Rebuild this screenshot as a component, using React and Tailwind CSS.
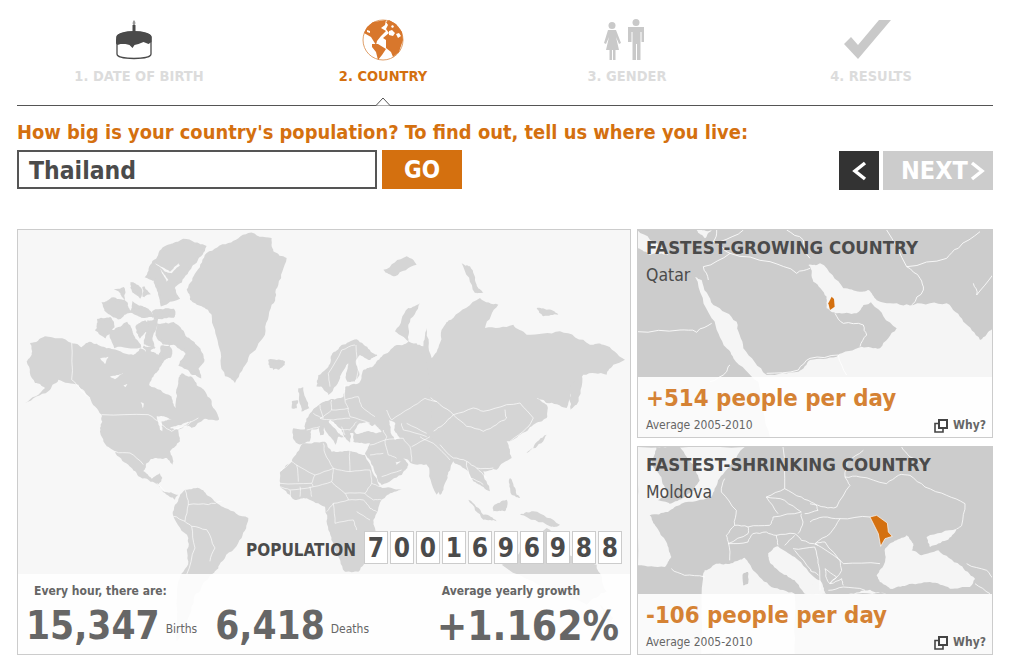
const F = "font-['DejaVu_Sans_Condensed','DejaVu_Sans',sans-serif]";

/* Deterministic midpoint displacement, so hand-traced coastlines read as coastlines. */
function rough(str, closed, amp, levels) {
  let seed = str.length * 7919 + 13;
  const rnd = () => {
    seed = (seed * 1664525 + 1013904223) % 4294967296;
    return seed / 4294967296 - 0.5;
  };
  const pts = str.trim().split(/\s+/).map((s) => s.split(",").map(Number));
  if (closed) pts.push(pts[0]);
  const out = [];
  const sub = (a, b, lvl) => {
    const dx = b[0] - a[0];
    const dy = b[1] - a[1];
    const len = Math.hypot(dx, dy);
    if (lvl === 0 || len < 5) return;
    const d = Math.min(len * 0.28, amp) * rnd();
    const m = [(a[0] + b[0]) / 2 - (dy / len) * d, (a[1] + b[1]) / 2 + (dx / len) * d];
    sub(a, m, lvl - 1);
    out.push(m);
    sub(m, b, lvl - 1);
  };
  for (let i = 0; i < pts.length - 1; i++) {
    out.push(pts[i]);
    sub(pts[i], pts[i + 1], levels);
  }
  if (!closed) out.push(pts[pts.length - 1]);
  return out.map((p) => p[0].toFixed(1) + "," + p[1].toFixed(1)).join(" ");
}

function Cake() {
  return (
    <svg width="36" height="41" viewBox="0 0 36 41" className="block">
      <rect x="16.500" y="6" width="3" height="9" fill="#4a4a4a" />
      <path d="M18 1c2 2 1.500 4 .8 5h-1.600c-.8-1-1-3 .8-5z" fill="#999" />
      <path d="M1 18c0-7 34-7 34 0v17c0 6-34 6-34 0z" fill="#fff" stroke="#4a4a4a" strokeWidth="1.300" />
      <path d="M.5 18c0-7 35-7 35 0v5l-3 2-5-2-5 2-4 1-2 3-3-3-4-1-5 0-3 1-2-2z" fill="#4a4a4a" />
    </svg>
  );
}

function Globe() {
  return (
    <svg width="42" height="42" viewBox="0 0 42 42" className="block">
      <circle cx="21" cy="21" r="20" fill="#fff" stroke="#e0a06a" strokeWidth="1" />
      <g fill="#d8772c">
        <path d="M11 3l13-2-1 5-4 3 5 3-5 5-4 5-1 4-5-8-7-4 3-6z" />
        <path d="M10 25l6 0 8 5-4 6-4 5-2-8-4-5z" />
        <path d="M27 1l7 4 6 8 1 8-4 12-6 5-2-5-5-4 0-8-3-2 6-5-3-4 2-4-2-3z" />
      </g>
      <g fill="#fff">
        <path d="M27 12l3-1 3 3-2 3-4-1zM34 15l3-1 2 3-3 2zM5 11l3 1 0 2-3-1zM30 6l2 1-1 2-2-1z" />
      </g>
    </svg>
  );
}

function Gender() {
  return (
    <svg width="42" height="41" viewBox="0 0 42 41" className="block" fill="#c9c9c9">
      <circle cx="10" cy="6.500" r="3.500" />
      <path d="M6 11h8l5 13-2 1-3-7 3 13h-3.500v10h-2.500v-10h-1v10h-2.500v-10h-3.500l3-13-3 7-2-1z" />
      <circle cx="34" cy="3.500" r="3.500" />
      <path d="M26 8h16v15h-2.500v-10h-1v28h-3.500v-16h-1v16h-3.500v-28h-1v10h-3.500z" />
    </svg>
  );
}

function Check() {
  return (
    <svg width="48" height="41" viewBox="0 0 48 41" className="block" fill="#c9c9c9">
      <path d="M0 25l7-7 7 8 21-25h12l-33 39z" />
    </svg>
  );
}

function Step({ icon, label, active, shift }) {
  return (
    <div className="flex flex-col items-center">
      <div className={`h-[43px] ${shift}`}>{icon}</div>
      <div className={`mt-[6px] text-[14.500px] leading-[17px] font-bold ${active ? "text-[#d4700f]" : "text-[#dcdcdc]"}`}>{label}</div>
    </div>
  );
}

const LAND = "#d5d5d5";
const SEA = "#f7f7f7";

function Pts({ list, fill, grow = 0, amp = 9 }) {
  return list.map((p, i) => (
    <polygon key={i} points={rough(p, true, amp, 3)} fill={fill} stroke={grow ? fill : "none"} strokeWidth={grow} />
  ));
}
function Lines({ list, w = 2, amp = 5 }) {
  return list.map((p, i) => (
    <polyline key={i} points={rough(p, false, amp, 2)} fill="none" stroke="#fff" strokeWidth={w} strokeLinejoin="round" />
  ));
}

/* zoom-6 frame: screen = (15 + x/3, 228 + y/3) */
const amer = [
  "45,345 90,325 170,345 200,358 225,341 265,356 305,366 355,381 375,361 410,371 430,381 465,351 460,381 440,411 415,446 402,471 470,506 482,541 490,466 500,436 530,446 545,471 570,490 590,520 600,545 612,575 570,572 545,590 530,600 510,592 490,605 495,640 465,670 472,710 455,690 420,690 395,705 385,730 410,752 435,735 442,750 430,770 445,790 490,800 480,815 450,795 420,765 370,745 340,710 300,670 265,640 255,600 260,560 225,510 190,470 130,455 100,490 30,525 90,480 60,465 35,400 50,380",
  "515,185 545,130 575,75 640,45 700,15 770,30 775,70 815,90 790,170 770,230 750,320 700,390 660,465 630,445 610,350 590,260 560,235 525,215",
  "510,785 560,785 590,810 630,840 700,870 680,930 630,990 600,1030 570,1060 540,1100 515,1200 485,1240 490,1060 520,1000 520,930 475,865 480,830",
  "760,395 810,400 790,425 765,420",
];
/* Arctic frame: screen = (90 + x/3, 240 + y/3) */
const arctic = [
  "170,110 190,65 220,25 280,0 345,20 320,60 290,100 250,145 265,175 215,195 210,170 195,120",
  "190,215 250,210 250,230 195,235",
  "125,130 150,145 150,170 130,155",
  "160,140 175,160 160,170",
  "40,190 70,175 110,190 120,215 85,235 60,220 45,205",
  "85,150 100,145 100,170",
  "130,190 165,205 190,230 155,230 125,215",
  "25,240 60,235 70,260 45,290 20,270",
  "60,275 110,250 130,290 150,320 75,320",
  "140,260 165,245 170,270 150,290",
  "175,245 200,240 185,290 190,320 165,310",
  "205,255 250,250 290,295 320,320 340,360 320,385 330,410 305,400 270,375 290,340 250,310 220,310 200,285",
  "215,320 240,325 240,350 215,360",
  "160,320 185,325 175,340",
];
const arcticLight = [
  "195,70 240,95 265,70 270,75 245,100 225,95",
  "210,85 235,120 230,125",
  "30,355 55,350 45,372",
  "60,410 100,400 75,418",
  "100,435 112,432 105,442",
  "262,335 276,335 276,348 262,348",
];
const lakes = [
  "425,565 445,565 470,575 440,580 442,610 435,605",
  "465,600 500,590 530,580 490,605",
  "375,520 385,525 385,545",
];
const amerB = [
  "170,345 170,455 200,490 225,510",
  "260,560 400,560 440,590 470,610 520,590 550,570",
  "300,670 345,675 385,710",
  "510,785 520,830 580,830 620,820",
  "475,865 510,880 530,895 575,905 600,960 585,1000",
  "530,895 540,960 515,1040",
  "425,765 450,790",
  "520,830 510,880",
];

/* zoom-7 frame: screen = (320 + x/3, 228 + y/3) */
const asia = [
  "175,410 240,360 265,340 225,310 265,240 300,225 265,290 265,340 310,355 320,300 335,390 355,360 375,290 400,270 480,210 535,230 495,300 580,290 620,320 720,310 810,350 850,350 915,395 880,410 860,440 790,440 750,500 740,540 680,525 650,510 680,530 680,570 640,590 600,620 560,640 575,690 530,725 490,730 510,790 480,770 460,760 430,720 400,700 350,800 320,710 300,600 200,500",
  "750,480 785,440 770,530 752,545",
  "620,675 640,660 680,620 670,640",
  "445,815 490,860 530,880 490,875",
  "520,835 560,815 555,850 520,850",
  "570,750 590,800 600,810 575,800",
  "640,850 720,890 690,895 600,860",
  "425,105 450,115 470,170 490,195 465,195",
  "650,240 680,245 715,260 670,265",
  "190,125 260,85 290,110 225,145",
  "545,1010 600,970 680,900 730,980 830,1010 860,1090 800,1130 690,1090",
  "840,1130 880,1170 870,1200",
];
const asiaB = [
  "200,545 270,520 320,505 360,530 400,560 460,540 490,550 560,530 600,525 640,570 620,600 570,640",
  "400,560 440,595 490,610 530,590 560,570 555,545",
  "370,590 400,560",
  "340,610 370,590",
  "360,650 400,690 440,700 470,720 520,720",
  "440,700 450,750 490,770",
  "470,720 500,750",
];

/* Europe frame: screen = (270 + x/3, 330 + y/3) */
const euro = [
  "70,295 105,298 110,265 125,245 150,222 185,207 220,200 225,170 268,158 280,120 305,112 335,80 380,45 440,40 470,100 490,300 480,400 430,402 400,385 415,405 395,435 335,465 325,455 295,385 285,372 300,340 250,335 250,310 240,310 240,338 222,320 215,300 180,270 165,290 125,298 118,335 85,342 72,330",
  "140,170 145,135 175,110 185,75 215,45 260,28 300,60 322,75 300,90 270,75 258,90 268,130 255,155 225,160 235,100 215,130 200,165 175,195 155,170",
  "160,288 175,275 205,310 222,322 205,320 197,345 165,300",
  "85,175 100,172 118,235 95,245 88,215",
  "65,215 85,212 80,235 65,235",
  "0,95 40,90 45,105 10,120",
  "150,290 160,290 160,315 150,315",
  "30,425 65,395 100,340 165,335 185,365 235,362 285,375 330,470 395,480 360,490 335,510 310,570 320,620 300,680 265,725 225,725 195,660 175,600 165,530 110,505 75,510 30,470",
  "480,390 480,430 510,495 530,450 540,400",
];
const euroSea = [
  "253,303 270,280 290,276 305,288 315,282 335,305 320,310 295,303 260,312",
  "358,270 375,278 372,300 390,325 375,330 362,305",
  "236,100 225,125 203,165 198,195 220,190 226,168 258,155 232,155 225,140",
  "375,395 395,395 380,405",
];
const euroB = [
  "30,425 65,395 72,400 135,435 190,415 165,370 160,340",
  "135,435 125,460 30,460",
  "80,405 85,455",
  "190,415 185,455 130,470 125,460",
  "240,362 240,425 190,415",
  "240,425 300,420 305,460 285,490",
  "185,455 225,490 285,490",
  "225,490 235,510 190,520 170,545",
  "285,490 310,510 335,510",
  "305,460 330,470",
  "30,470 60,480 130,470",
  "60,480 60,505",
  "90,470 90,500",
  "120,470 125,500",
  "235,510 280,510 300,535 320,545",
  "190,520 195,580 250,570 260,600",
  "260,545 300,570",
  "300,345 345,330 400,325",
  "345,330 355,375 380,385",
  "300,375 340,370",
  "335,440 395,420",
  "400,325 420,350 425,395",
  "425,350 480,320",
  "350,240 365,270 420,235 465,205 500,215",
  "395,280 400,300 470,320",
  "410,280 470,310",
  "450,320 490,340 540,390",
  "180,170 175,130 215,60 255,45",
  "258,45 265,120 255,155",
  "225,165 225,210 265,200 275,230 315,260",
  "150,225 160,265 130,250",
  "185,210 185,240 150,265",
  "225,210 235,235 185,240",
  "235,235 240,260 300,280",
  "150,265 190,270 240,265",
  "180,270 210,300 240,300 260,275",
  "215,290 225,315",
  "340,300 350,320 345,330",
  "110,300 150,290",
];

function WorldMap() {
  return (
    <svg className="absolute inset-0" width="612" height="424" viewBox="18 230 612 424">
      <g transform="translate(15 228) scale(0.3333)">
        <Pts list={amer} fill={LAND} />
        <Pts list={lakes} fill={SEA} amp={3} />
        <Lines list={amerB} />
      </g>
      <g transform="translate(90 240) scale(0.3333)">
        <Pts list={arctic} fill={LAND} grow={7} amp={8} />
        <Pts list={arcticLight} fill={SEA} amp={2} />
      </g>
      <g transform="translate(320 228) scale(0.3333)">
        <Pts list={asia} fill={LAND} />
        <Lines list={asiaB} />
      </g>
      <g transform="translate(270 330) scale(0.3333)">
        <Pts list={euro} fill={LAND} amp={5} />
        <Pts list={euroSea} fill={SEA} amp={3} />
        <Lines list={euroB} w={1.800} amp={3} />
      </g>
    </svg>
  );
}

const qSea = [
  "195,155 215,165 250,240 320,290 340,370 410,450 505,440 540,405 620,395 695,365 750,370 800,310 725,235 715,215 770,235 850,240 950,235 1000,290 1050,345 1088,310 1088,640 420,640 385,470 310,400 290,370 245,280",
  "535,120 570,115 640,190 690,200 715,195 740,225 700,240 680,265 620,265 590,250 590,215 550,170",
  "22,70 60,90 115,90 100,70 22,15",
  "200,15 245,15 225,40",
];
const qLines = [
  "22,320 150,315 200,322 245,295",
  "235,165 220,125 300,85 250,50 260,15",
  "300,85 420,110 500,145 540,130",
  "830,125 950,100 985,70 1050,20",
  "830,125 870,160 880,195 845,240",
  "615,265 640,295 700,300 710,330 690,365",
  "410,445 505,435 540,400 625,390 650,450",
  "1030,175 1040,210 1088,150",
  "470,15 520,45 540,100",
  "770,15 830,125",
  "340,15 270,50",
  "300,420 290,440 240,470",
];

function QatarMap() {
  return (
    <svg className="absolute inset-0" width="354" height="207" viewBox="24 15 1062 621">
      <Pts list={qSea} fill="#f5f5f5" amp={7} />
      <Lines list={qLines} w={2.500} amp={8} />
      <polygon fill="#d4700f" points="605,215 612,222 614,245 600,255 595,235" />
    </svg>
  );
}

const mSea1 = ["0,0 320,0 280,50 240,100 220,150 130,170 90,195 35,205 55,240 85,285 100,330 80,360 0,355"];
const mUk = ["55,0 125,0 170,60 185,100 170,130 140,150 95,170 60,160 90,140 70,90 40,50"];
const mSea2 = [
  "200,370 240,350 285,348 320,332 345,370 400,420 470,440 470,621 190,621 195,395",
  "390,320 420,298 470,330 540,400 565,440 500,440 470,400 420,370 395,345",
  "520,400 546,400 560,440 530,440",
];
const mCorsica = ["315,380 330,375 330,410 315,415"];
const mLines = [
  "260,95 250,135 295,190 290,235 265,265 272,290 275,340",
  "290,235 330,240 330,260 270,290",
  "270,290 330,285 345,260 385,255 415,265",
  "330,240 395,235 405,210 490,195 440,160 385,150 440,125 490,150 530,170 540,190 500,200",
  "435,0 440,125",
  "385,150 420,200",
  "415,265 470,260 490,280 540,295",
  "490,200 495,225 480,260",
  "440,295 470,265",
  "465,305 530,300 540,350",
  "470,310 520,370",
  "100,365 140,385 200,390",
  "415,265 420,295",
];
const mSeaE = [
  "200,385 225,345 225,305 250,285 290,265 310,290 305,310 335,325 385,310 450,355 495,395 480,420 420,425 360,405 290,415 240,425 210,405",
  "350,270 440,245 410,280 360,300",
  "115,440 180,428 230,440",
];
const mLinesE = [
  "0,170 45,180 80,180 120,115 105,90 150,90 230,110 265,85 300,85 345,120 410,145 465,170 455,235 440,245",
  "105,90 110,40 160,10",
  "275,0 300,30 340,50",
  "0,225 40,210 90,215 180,210",
  "90,215 60,260 15,290 45,285 100,350 210,350",
  "15,290 90,340 95,370 60,410 95,395 100,415",
  "50,395 45,365 80,390 60,410 50,395",
  "470,350 530,370 549,400",
  "495,410 540,440",
  "55,430 100,420 165,430",
  "25,350 30,430",
  "0,370 25,385",
];

function MoldovaMap() {
  return (
    <svg className="absolute inset-0" width="354" height="207" viewBox="0 0 1062 621">
      <Pts list={mSea1} fill="#f5f5f5" amp={5} />
      <Pts list={mUk} fill="#ccc" amp={5} />
      <Pts list={mSea2} fill="#f5f5f5" amp={5} />
      <Pts list={mCorsica} fill="#ccc" amp={2} />
      <g transform="translate(516 0)">
        <Pts list={mSeaE} fill="#f5f5f5" amp={5} />
        <Lines list={mLinesE} w={2.300} amp={5} />
        <polygon fill="#d4700f" stroke="#fff" strokeWidth="2" points="180,210 200,205 232,228 235,255 247,268 225,275 212,298 205,260" />
      </g>
      <Lines list={mLines} w={2.300} amp={5} />
    </svg>
  );
}

function CopyIcon() {
  return (
    <svg width="14" height="14" viewBox="0 0 14 14" fill="none" stroke="#444" strokeWidth="1.600">
      <rect x="5" y="1" width="8" height="8" strokeWidth="2" />
      <path d="M5 4.500H1v8.500h8V9" />
    </svg>
  );
}

function Card({ title, name, value, map }) {
  return (
    <div className="relative h-[209px] border border-[#ccc] bg-[#ccc] overflow-hidden flex flex-col">
      {map}
      <div className="relative h-[147px] pl-[8px] pt-[7px]">
        <div className="text-[18.500px] leading-[22px] font-bold text-[#4b4b4b]">{title}</div>
        <div className="mt-[6px] text-[17.500px] leading-[20px] text-[#4b4b4b]">{name}</div>
      </div>
      <div className="relative flex-1 bg-white/90 pl-[8px] pr-[6px]">
        <div className="mt-[6px] text-[23.800px] leading-[30px] font-bold text-[#d58234]">{value}</div>
        <div className="mt-[5px] flex items-center justify-between">
          <span className="text-[12px] leading-[15px] text-[#666]">Average 2005-2010</span>
          <span className="flex items-center gap-[5px] text-[12px] leading-[15px] font-bold text-[#666]"><CopyIcon />Why?</span>
        </div>
      </div>
    </div>
  );
}

const digits = "7001696988".split("");

export default function App() {
  return (
    <div className={`${F} w-[1018px] h-[670px] bg-white overflow-hidden pl-[17px] pr-[25px] pt-[19px]`}>
      <div className="grid grid-cols-4">
        <Step icon={<Cake />} label="1. DATE OF BIRTH" shift="mr-[10px]" />
        <Step icon={<Globe />} label="2. COUNTRY" active shift="" />
        <Step icon={<Gender />} label="3. GENDER" shift="mr-[8px]" />
        <Step icon={<Check />} label="4. RESULTS" shift="mr-[7px]" />
      </div>
      <div className="relative mt-[20px] h-px bg-[#555]">
        <svg className="absolute left-[357px] top-[-8px]" width="18" height="9" viewBox="0 0 18 9">
          <path d="M1 8.500H2L9 1l7 7.500h1" fill="#fff" stroke="#555" />
        </svg>
      </div>
      <div className="mt-[15px] text-[19.900px] leading-[24px] font-bold text-[#d4700f]">How big is your country's population? To find out, tell us where you live:</div>
      <div className="mt-[5px] flex items-start">
        <div className="w-[360px] h-[39px] border-2 border-[#555] pl-[10px] text-[24.500px] leading-[37px] font-bold text-[#4b4b4b]">Thailand</div>
        <div className="ml-[5px] w-[80px] h-[39px] bg-[#d4700f] text-white text-[24px] leading-[41px] font-bold text-center">GO</div>
        <div className="ml-auto mt-[1px] flex">
          <div className="w-[40px] h-[39px] bg-[#333] flex items-center justify-center">
            <svg width="16" height="22" viewBox="0 0 16 22"><path d="M14 3L4 11l10 8" fill="none" stroke="#fff" strokeWidth="3.500" /></svg>
          </div>
          <div className="ml-[4px] w-[110px] h-[39px] bg-[#ccc] flex items-center pl-[18px] text-white text-[25px] font-bold">
            NEXT
            <svg className="ml-[2px]" width="16" height="22" viewBox="0 0 16 22"><path d="M2 3l10 8-10 8" fill="none" stroke="#fff" strokeWidth="3.500" /></svg>
          </div>
        </div>
      </div>

      <div className="mt-[39px] flex gap-[6px]">
        <div className="relative w-[614px] h-[426px] border border-[#ccc] bg-[#f7f7f7] overflow-hidden flex flex-col">
          <WorldMap />
          <div className="relative h-[344px] flex items-end justify-end pr-[8px] pb-[10px]">
            <span className="mr-[8px] mb-[4px] text-[17px] leading-[20px] font-bold text-[#4b4b4b]">POPULATION</span>
            <div className="flex gap-[2px]">
              {digits.map((d, i) => (
                <div key={i} className="w-[24px] h-[33px] border border-[#ccc] bg-white text-center text-[26px] leading-[33px] font-bold text-[#4b4b4b]">{d}</div>
              ))}
            </div>
          </div>
          <div className="relative flex-1 bg-white/90 flex justify-between pl-[8px] pr-[11px]">
            <div>
              <div className="ml-[8px] mt-[9px] text-[12px] leading-[16px] font-bold text-[#666]">Every hour, there are:</div>
              <div className="mt-[5px] flex items-center">
                <span className="text-[38.500px] leading-[44px] font-bold text-[#666]">15,347</span>
                <span className="ml-[6px] mt-[5px] text-[12px] text-[#666]">Births</span>
                <span className="ml-[18px] text-[38.500px] leading-[44px] font-bold text-[#666]">6,418</span>
                <span className="ml-[6px] mt-[5px] text-[12px] text-[#666]">Deaths</span>
              </div>
            </div>
            <div className="flex flex-col items-start">
              <div className="ml-[5px] mt-[9px] text-[12px] leading-[16px] font-bold text-[#666]">Average yearly growth</div>
              <div className="mt-[5px] text-[40.500px] leading-[44px] font-bold text-[#666]">+1.162%</div>
            </div>
          </div>
        </div>
        <div className="w-[356px] flex flex-col gap-[8px]">
          <Card title="FASTEST-GROWING COUNTRY" name="Qatar" value="+514 people per day" map={<QatarMap />} />
          <Card title="FASTEST-SHRINKING COUNTRY" name="Moldova" value="-106 people per day" map={<MoldovaMap />} />
        </div>
      </div>
    </div>
  );
}
